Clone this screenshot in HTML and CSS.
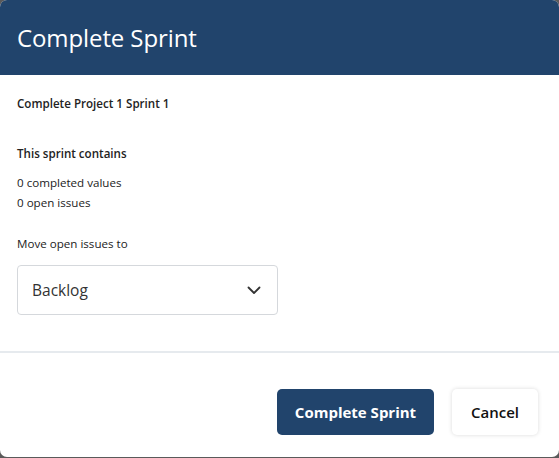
FILE: index.html
```html
<!DOCTYPE html>
<html>
<head>
<meta charset="utf-8">
<link rel="stylesheet" href="styles.css">
</head>
<body>
<div class="modal">
  <header class="modal-header">
    <h1 class="modal-title">Complete Sprint</h1>
  </header>
  <section class="modal-body">
    <p class="sprint-name">Complete Project 1 Sprint 1</p>
    <p class="section-title">This sprint contains</p>
    <p class="stat">0 completed values</p>
    <p class="stat">0 open issues</p>
    <label class="field-label">Move open issues to</label>
    <div class="select">
      <span class="select-value">Backlog</span>
      <svg class="chevron" width="14" height="9" viewBox="0 0 14 9"><path d="M1.5 1.5 L7 7 L12.5 1.5" fill="none" stroke="#333" stroke-width="1.8" stroke-linecap="round" stroke-linejoin="round"/></svg>
    </div>
  </section>
  <footer class="modal-footer">
    <button class="btn btn-primary">Complete Sprint</button>
    <button class="btn btn-secondary">Cancel</button>
  </footer>
</div>
</body>
</html>
```
FILE: styles.css
```css
html, body {
  margin: 0;
  padding: 0;
  background: #5a5a5a;
}
body {
  width: 559px;
  height: 458px;
  font-family: "Open Sans", "Noto Sans", sans-serif;
  color: #222;
}
.modal {
  width: 559px;
  height: 457px;
  background: #fff;
  border-radius: 7px;
  overflow: hidden;
  display: flex;
  flex-direction: column;
}
.modal-header {
  background: #21446c;
  height: 75px;
  display: flex;
  align-items: center;
  padding: 0 17px;
  box-sizing: border-box;
}
.modal-title {
  margin: 0;
  color: #fff;
  font-size: 24px;
  font-weight: 500;
  letter-spacing: -0.1px;
}
.modal-body {
  padding: 19px 17px 0;
  height: 278px;
  box-sizing: border-box;
  border-bottom: 2px solid #e6eaee;
}
.modal-body p {
  margin: 0;
  font-size: 11.6px;
}
.sprint-name {
  font-weight: 600;
  line-height: 18px;
  margin-top: 1px !important;
}
.section-title {
  font-weight: 600;
  line-height: 18px;
  margin-top: 32px !important;
}
.stat {
  line-height: 20px;
}
.section-title + .stat {
  margin-top: 10px !important;
}
.field-label {
  display: block;
  font-size: 11.6px;
  line-height: 18px;
  margin-top: 22px;
}
.select {
  margin-top: 12px;
  width: 261px;
  height: 50px;
  box-sizing: border-box;
  border: 1px solid #d5d8dc;
  border-radius: 4px;
  display: flex;
  align-items: center;
  justify-content: space-between;
  padding: 0 16px 0 14px;
}
.select-value {
  font-size: 15.5px;
  color: #333;
}
.chevron {
  display: block;
}
.modal-footer {
  flex: 1;
  display: flex;
  justify-content: flex-end;
  align-items: flex-start;
  padding: 36px 21px 0 0;
  gap: 18px;
}
.btn {
  height: 46px;
  border: none;
  border-radius: 5px;
  font-family: "Open Sans", "Noto Sans", sans-serif;
  font-size: 15px;
  font-weight: 700;
  cursor: pointer;
}
.btn-primary {
  width: 157px;
  background: #21446c;
  color: #fff;
}
.btn-secondary {
  width: 86px;
  background: #fff;
  color: #111;
  font-weight: 600;
  box-shadow: 0 0 4px rgba(0,0,0,0.15);
}
```
